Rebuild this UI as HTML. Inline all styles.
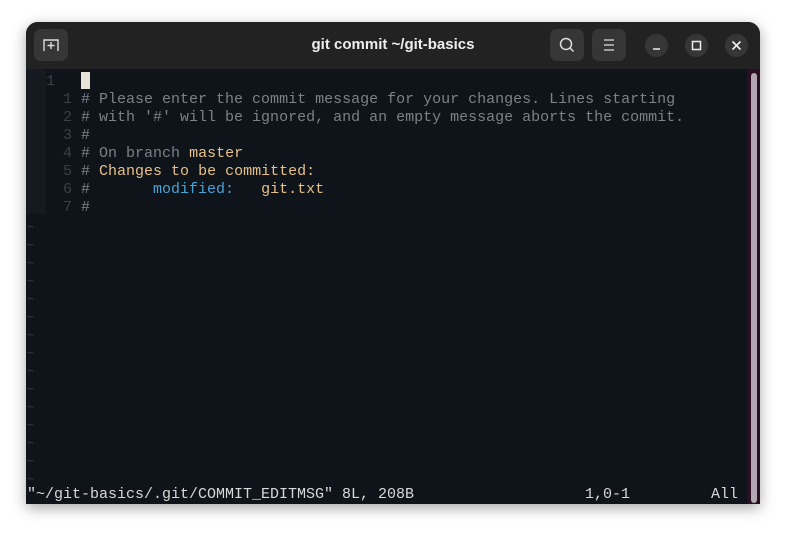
<!DOCTYPE html>
<html><head><meta charset="utf-8"><style>
html,body{margin:0;padding:0;width:786px;height:533px;background:#fff;overflow:hidden}
.win{position:absolute;left:26px;top:22px;width:734px;height:482px;border-radius:12px 12px 0 0;background:#0f141a;overflow:hidden;box-shadow:0 4px 14px rgba(0,0,0,.35)}
.tb{position:absolute;left:0;top:0;width:734px;height:47px;background:#222222}
.title{position:absolute;left:0;width:734px;top:14px;text-align:center;color:#eee;font:bold 15px "Liberation Sans",sans-serif}
.btn{position:absolute;top:7px;width:34px;height:32px;border-radius:7px;background:#363636}
.cb{position:absolute;top:12px;width:23px;height:23px;border-radius:50%;background:#363636}
.ed{position:absolute;left:0;top:47px;width:721px;height:435px;font:15px/18px "Liberation Mono",monospace;color:#6c7077}
.sign{position:absolute;left:0;top:0;width:20px;height:145px;background:#141a20}
.l{position:absolute;white-space:pre}
.c{color:#7c8088}.y{color:#e6c088}.b{color:#4aa3d6}.t{color:#3a3f48}
.rb{position:absolute;left:721px;top:47px;width:13px;height:435px;background:#2a0f22}
.th{position:absolute;left:725px;top:51px;width:6px;height:430px;border-radius:3px;background:#b2a6b2}
</style></head><body>
<div class="win">
<div class="tb">
 <div class="btn" style="left:8px"><svg width="34" height="32"><path d="M10 22V11h14v11" fill="none" stroke="#ddd" stroke-width="1.4"/><path d="M17 13v7M13.5 16.5h7" stroke="#ddd" stroke-width="1.4"/></svg></div>
 <div class="title">git commit ~/git-basics</div>
 <div class="btn" style="left:524px"><svg width="34" height="32"><circle cx="16" cy="15" r="5.5" fill="none" stroke="#ddd" stroke-width="1.5"/><path d="M20 19l3.5 3.5" stroke="#ddd" stroke-width="1.5"/></svg></div>
 <div class="btn" style="left:566px"><svg width="34" height="32"><path d="M12 11h10M12 16h10M12 21h10" stroke="#ddd" stroke-width="1.3"/></svg></div>
 <div class="cb" style="left:619px"><svg width="23" height="23"><path d="M8 15h7" stroke="#eee" stroke-width="1.5"/></svg></div>
 <div class="cb" style="left:659px"><svg width="23" height="23"><rect x="7.5" y="7.5" width="8" height="8" fill="none" stroke="#eee" stroke-width="1.5"/></svg></div>
 <div class="cb" style="left:699px"><svg width="23" height="23"><path d="M7.5 7.5l8 8M15.5 7.5l-8 8" stroke="#eee" stroke-width="1.6"/></svg></div>
</div>
<div class="ed">
 <div class="sign"></div>
 <div class="l t" style="left:20px;top:4px">1</div>
 <div style="position:absolute;left:55px;top:3px;width:9px;height:17px;background:#e8e4d8"></div>
 <div class="l" style="left:37px;top:22px"><span class="t">1</span> <span class="c"># Please enter the commit message for your changes. Lines starting</span></div>
 <div class="l" style="left:37px;top:40px"><span class="t">2</span> <span class="c"># with '#' will be ignored, and an empty message aborts the commit.</span></div>
 <div class="l" style="left:37px;top:58px"><span class="t">3</span> <span class="c">#</span></div>
 <div class="l" style="left:37px;top:76px"><span class="t">4</span> <span class="c"># On branch </span><span class="y">master</span></div>
 <div class="l" style="left:37px;top:94px"><span class="t">5</span> <span class="c"># </span><span class="y">Changes to be committed:</span></div>
 <div class="l" style="left:37px;top:112px"><span class="t">6</span> <span class="c">#       </span><span class="b">modified:   </span><span class="y">git.txt</span></div>
 <div class="l" style="left:37px;top:130px"><span class="t">7</span> <span class="c">#</span></div>
 <div class="l t" style="left:1px;top:150px;line-height:18px;font-size:12px">~
~
~
~
~
~
~
~
~
~
~
~
~
~
~</div>
 <div class="l" style="left:1px;top:417px;color:#d8d8d8">"~/git-basics/.git/COMMIT_EDITMSG" 8L, 208B</div>
 <div class="l" style="left:559px;top:417px;color:#d8d8d8">1,0-1</div>
 <div class="l" style="left:685px;top:417px;color:#d8d8d8">All</div>
</div>
<div class="rb"></div><div class="th"></div>
</div>
</body></html>
